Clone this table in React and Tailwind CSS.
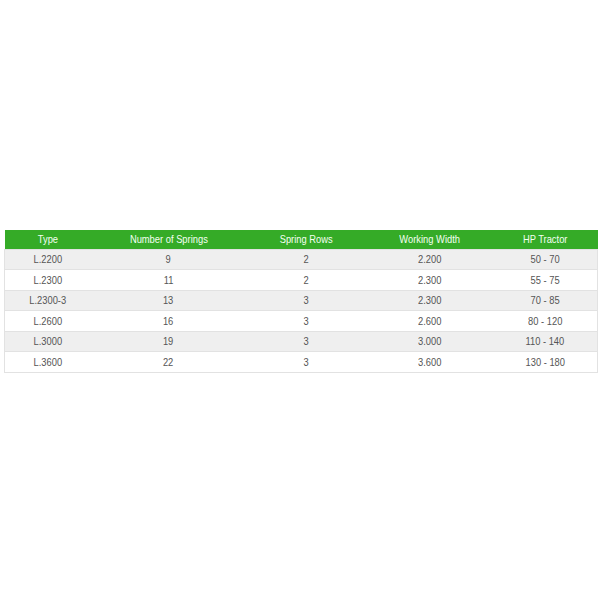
const rows = [
  ['L.2200', '9', '2', '2.200', '50 - 70'],
  ['L.2300', '11', '2', '2.300', '55 - 75'],
  ['L.2300-3', '13', '3', '2.300', '70 - 85'],
  ['L.2600', '16', '3', '2.600', '80 - 120'],
  ['L.3000', '19', '3', '3.000', '110 - 140'],
  ['L.3600', '22', '3', '3.600', '130 - 180'],
]

const headers = ['Type', 'Number of Springs', 'Spring Rows', 'Working Width', 'HP Tractor']
const widths = ['w-[86px]', 'w-[156px]', 'w-[120px]', 'w-[126px]', 'w-[105px]']

export default function App() {
  return (
    <div className="h-[600px] w-[600px] bg-white pt-[230px] px-[4px] font-['Liberation_Sans',Arial,sans-serif]">
      <table className="w-[593px] table-fixed border-collapse text-[11px] text-[#555]">
        <thead>
          <tr className="h-[19px] bg-[#35ab27] text-[#f4fff2]">
            {headers.map((h, i) => (
              <th key={h} className={`${widths[i]} p-0 text-center font-normal`}>
                <span className="inline-block scale-x-[0.85]">{h}</span>
              </th>
            ))}
          </tr>
        </thead>
        <tbody>
          {rows.map((r, i) => (
            <tr key={r[0]} className={`h-[20.5px] border border-[#e2e2e2] ${i % 2 === 0 ? 'bg-[#efefef]' : 'bg-white'}`}>
              {r.map((c, j) => (
                <td key={j} className="p-0 text-center">
                  <span className="inline-block scale-x-[0.85]">{c}</span>
                </td>
              ))}
            </tr>
          ))}
        </tbody>
      </table>
    </div>
  )
}
